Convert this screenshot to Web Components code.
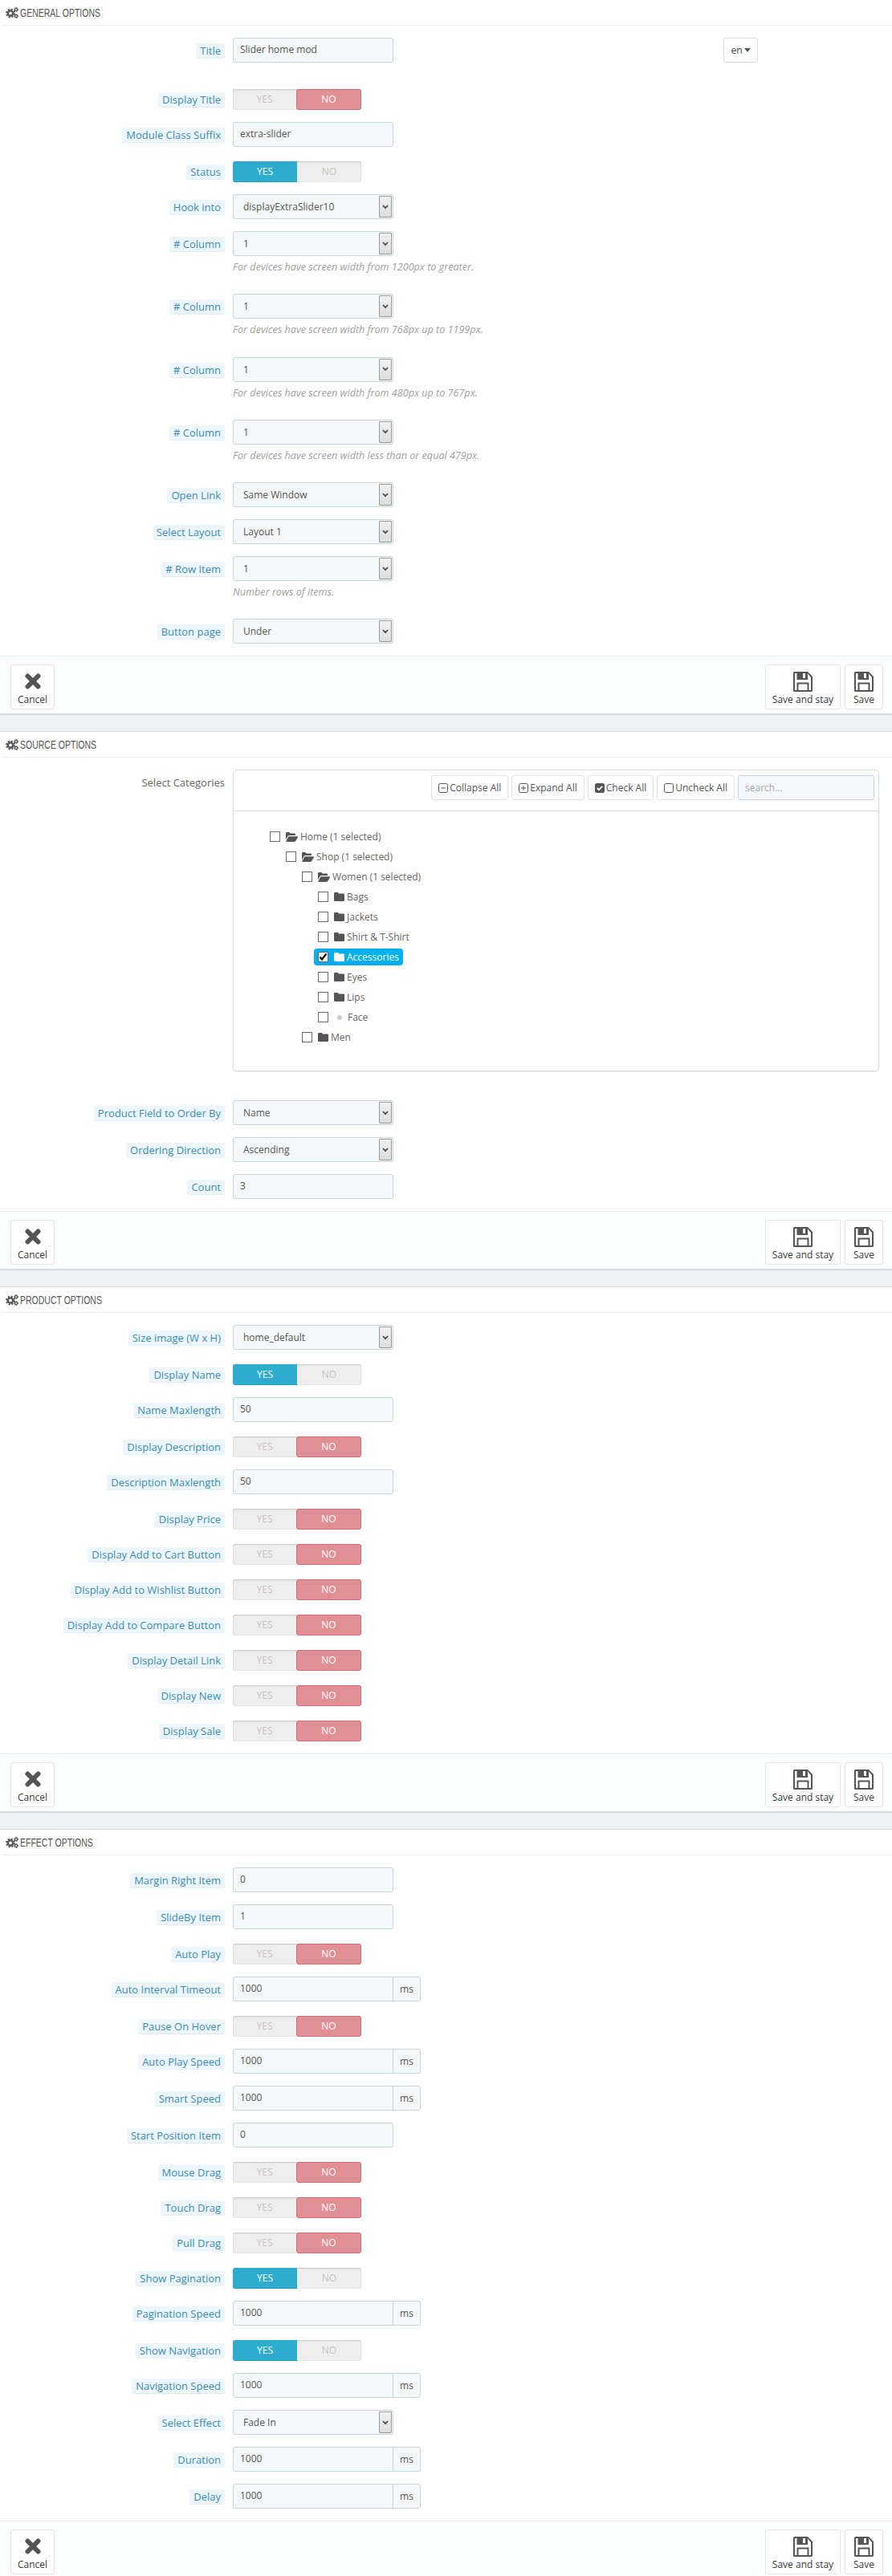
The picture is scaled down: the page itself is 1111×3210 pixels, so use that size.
<!DOCTYPE html>
<html lang="en">
<head>
<meta charset="utf-8">
<title>Slider home mod</title>
<style>
  html, body { margin: 0; padding: 0; background: #eff1f2; }
  body { font: 12px/18px "Open Sans", "Liberation Sans", sans-serif; color: #555; overflow-x: hidden; }
</style>
</head>
<body>

<ps-panel heading="General options" style="margin-top:-1px">
  <form-row label="Title" style="margin-bottom:30px">
    <div style="display:flex">
      <ps-input value="Slider home mod"></ps-input>
      <lang-button style="margin-left:411px"></lang-button>
    </div>
  </form-row>
  <form-row label="Display Title"><ps-switch></ps-switch></form-row>
  <form-row label="Module Class Suffix"><ps-input value="extra-slider"></ps-input></form-row>
  <form-row label="Status"><ps-switch on></ps-switch></form-row>
  <form-row label="Hook into"><ps-select value="displayExtraSlider10"></ps-select></form-row>
  <form-row label="# Column" help="For devices have screen width from 1200px to greater."><ps-select value="1"></ps-select></form-row>
  <form-row label="# Column" help="For devices have screen width from 768px up to 1199px."><ps-select value="1"></ps-select></form-row>
  <form-row label="# Column" help="For devices have screen width from 480px up to 767px."><ps-select value="1"></ps-select></form-row>
  <form-row label="# Column" help="For devices have screen width less than or equal 479px."><ps-select value="1"></ps-select></form-row>
  <form-row label="Open Link"><ps-select value="Same Window"></ps-select></form-row>
  <form-row label="Select Layout"><ps-select value="Layout 1"></ps-select></form-row>
  <form-row label="# Row Item" help="Number rows of items."><ps-select value="1"></ps-select></form-row>
  <form-row label="Button page"><ps-select value="Under"></ps-select></form-row>
</ps-panel>

<ps-panel heading="Source options">
  <form-row label="Select Categories" plain>
    <category-tree>
      <tree-node name="Home (1 selected)" open>
        <tree-node name="Shop (1 selected)" open>
          <tree-node name="Women (1 selected)" open>
            <tree-node name="Bags"></tree-node>
            <tree-node name="Jackets"></tree-node>
            <tree-node name="Shirt &amp; T-Shirt"></tree-node>
            <tree-node name="Accessories" selected></tree-node>
            <tree-node name="Eyes"></tree-node>
            <tree-node name="Lips"></tree-node>
            <tree-node name="Face" leaf></tree-node>
          </tree-node>
          <tree-node name="Men"></tree-node>
        </tree-node>
      </tree-node>
    </category-tree>
  </form-row>
  <form-row label="Product Field to Order By"><ps-select value="Name"></ps-select></form-row>
  <form-row label="Ordering Direction"><ps-select value="Ascending"></ps-select></form-row>
  <form-row label="Count"><ps-input value="3"></ps-input></form-row>
</ps-panel>

<ps-panel heading="Product options">
  <form-row label="Size image (W x H)"><ps-select value="home_default"></ps-select></form-row>
  <form-row label="Display Name"><ps-switch on></ps-switch></form-row>
  <form-row label="Name Maxlength"><ps-input value="50"></ps-input></form-row>
  <form-row label="Display Description"><ps-switch></ps-switch></form-row>
  <form-row label="Description Maxlength"><ps-input value="50"></ps-input></form-row>
  <form-row label="Display Price"><ps-switch></ps-switch></form-row>
  <form-row label="Display Add to Cart Button"><ps-switch></ps-switch></form-row>
  <form-row label="Display Add to Wishlist Button"><ps-switch></ps-switch></form-row>
  <form-row label="Display Add to Compare Button"><ps-switch></ps-switch></form-row>
  <form-row label="Display Detail Link"><ps-switch></ps-switch></form-row>
  <form-row label="Display New"><ps-switch></ps-switch></form-row>
  <form-row label="Display Sale"><ps-switch></ps-switch></form-row>
</ps-panel>

<ps-panel heading="Effect options">
  <form-row label="Margin Right Item"><ps-input value="0"></ps-input></form-row>
  <form-row label="SlideBy Item"><ps-input value="1"></ps-input></form-row>
  <form-row label="Auto Play"><ps-switch></ps-switch></form-row>
  <form-row label="Auto Interval Timeout"><ps-input value="1000" addon="ms"></ps-input></form-row>
  <form-row label="Pause On Hover"><ps-switch></ps-switch></form-row>
  <form-row label="Auto Play Speed"><ps-input value="1000" addon="ms"></ps-input></form-row>
  <form-row label="Smart Speed"><ps-input value="1000" addon="ms"></ps-input></form-row>
  <form-row label="Start Position Item"><ps-input value="0"></ps-input></form-row>
  <form-row label="Mouse Drag"><ps-switch></ps-switch></form-row>
  <form-row label="Touch Drag"><ps-switch></ps-switch></form-row>
  <form-row label="Pull Drag"><ps-switch></ps-switch></form-row>
  <form-row label="Show Pagination"><ps-switch on></ps-switch></form-row>
  <form-row label="Pagination Speed"><ps-input value="1000" addon="ms"></ps-input></form-row>
  <form-row label="Show Navigation"><ps-switch on></ps-switch></form-row>
  <form-row label="Navigation Speed"><ps-input value="1000" addon="ms"></ps-input></form-row>
  <form-row label="Select Effect"><ps-select value="Fade In"></ps-select></form-row>
  <form-row label="Duration"><ps-input value="1000" addon="ms"></ps-input></form-row>
  <form-row label="Delay"><ps-input value="1000" addon="ms"></ps-input></form-row>
</ps-panel>

<script>
const gearsIcon = `
  <svg width="16" height="14" viewBox="0 0 16 14" fill="none" stroke="#555">
    <circle cx="6" cy="7.5" r="3.1" stroke-width="2.4"/>
    <circle cx="6" cy="7.5" r="4.9" stroke-width="2" stroke-dasharray="2.2 1.65"/>
    <circle cx="13" cy="3" r="1.6" stroke-width="1.3"/>
    <circle cx="13" cy="3" r="2.5" stroke-width="1" stroke-dasharray="1.2 1.2"/>
    <circle cx="13" cy="11" r="1.6" stroke-width="1.3"/>
    <circle cx="13" cy="11" r="2.5" stroke-width="1" stroke-dasharray="1.2 1.2"/>
  </svg>`;
const cancelIcon = `
  <svg width="20" height="20" viewBox="0 0 20 20">
    <path d="M3.5 3.5L16.5 16.5M16.5 3.5L3.5 16.5" stroke="#555" stroke-width="6" stroke-linecap="round"/>
  </svg>`;
const saveIcon = `
  <svg width="24" height="25" viewBox="0 0 24 25">
    <path fill-rule="evenodd" fill="#555" d="M1.5 0H18l6 6v17.5a1.5 1.5 0 0 1-1.5 1.5h-21A1.5 1.5 0 0 1 0 23.500V1.500A1.500 1.500 0 0 1 1.500 0zM2 2v21h2.500v-9.500h15V23H22V7l-4-4.500V10H4.500V2zM6.500 15.500V23h11v-7.500z"/>
    <rect x="12" y="2" width="3" height="6" fill="#fff"/>
  </svg>`;
const folderIcon = `
  <svg width="13" height="11" viewBox="0 0 13 11"><path fill="currentColor" d="M1.200 0H4.500a1 1 0 0 1 1 .8L5.800 1.500H11.800A1.200 1.200 0 0 1 13 2.700V9.800A1.200 1.200 0 0 1 11.800 11H1.200A1.200 1.200 0 0 1 0 9.800V1.200A1.200 1.200 0 0 1 1.200 0z"/></svg>`;
const folderOpenIcon = `
  <svg width="15" height="12" viewBox="0 0 15 12"><path fill="currentColor" d="M0 9.500V1.200A1.200 1.200 0 0 1 1.200 0H4.200L5.500 1.500H10.800A1.200 1.200 0 0 1 12 2.700V4H4.200A2 2 0 0 0 2.500 5zM3.500 5.200H14a1 1 0 0 1 .8 1.500L12 11.200a1.500 1.500 0 0 1-1.200.8H1a.7.7 0 0 1-.6-1.100z"/></svg>`;

const panelTemplate = document.createElement("template");
panelTemplate.innerHTML = `
  <style>
    :host { display: block; background: #fff; border-top: 1px solid #d3d8db; margin-bottom: 20px; }
    .heading { display: flex; align-items: center; height: 31px; margin-left: 2px; padding-left: 5px; border-bottom: 1px solid #eeeff0; }
    .title { display: inline-block; margin-left: 2px; font: 15px/31px "Liberation Sans", sans-serif; color: #555; text-transform: uppercase; white-space: nowrap; transform: scaleX(.7); transform-origin: left center; }
    .body { padding-top: 15px; }
    .footer { display: flex; gap: 5px; height: 74px; box-sizing: border-box; padding: 10px 11px 0 13px; background: #fcfdfe; border-top: 1px solid #eaedef; border-bottom: 2px solid #d8dadb; }
    .spacer { flex: 1; }
  </style>
  <div class="heading">${gearsIcon}<span class="title"></span></div>
  <div class="body"><slot></slot></div>
  <div class="footer">
    <tool-button icon="cancel" label="Cancel" style="width:55px"></tool-button>
    <span class="spacer"></span>
    <tool-button icon="save" label="Save and stay" style="width:94px"></tool-button>
    <tool-button icon="save" label="Save" style="width:48px"></tool-button>
  </div>
`;
class PsPanel extends HTMLElement {
  constructor() {
    super();
    this.attachShadow({ mode: "open" });
    this.shadowRoot.appendChild(panelTemplate.content.cloneNode(true));
  }
  connectedCallback() {
    this.shadowRoot.querySelector(".title").textContent = this.getAttribute("heading");
  }
}

const toolTemplate = document.createElement("template");
toolTemplate.innerHTML = `
  <style>
    :host { display: block; height: 56px; box-sizing: border-box; background: #fff; border: 1px solid #e6e6e6; border-radius: 3px; color: #363a41; text-align: center; }
    .icon { display: flex; justify-content: center; align-items: center; height: 32px; margin-top: 4px; }
    .text { display: block; font-size: 12px; line-height: 16px; white-space: nowrap; margin-top: -1px; }
  </style>
  <div class="icon"></div>
  <span class="text"></span>
`;
class ToolButton extends HTMLElement {
  constructor() {
    super();
    this.attachShadow({ mode: "open" });
    this.shadowRoot.appendChild(toolTemplate.content.cloneNode(true));
  }
  connectedCallback() {
    this.shadowRoot.querySelector(".icon").innerHTML = this.getAttribute("icon") === "save" ? saveIcon : cancelIcon;
    this.shadowRoot.querySelector(".text").textContent = this.getAttribute("label");
  }
}

const rowTemplate = document.createElement("template");
rowTemplate.innerHTML = `
  <style>
    :host { display: flex; margin-bottom: 15px; }
    .left { flex: 0 0 280px; display: flex; justify-content: flex-end; align-items: flex-start; margin-right: 10px; }
    .label { margin-top: 7px; padding: 0 5px; height: 18px; line-height: 18px; font-size: 13px; background: #edf7fb; border-bottom: 1px solid #dfeef5; border-radius: 3px; color: #3a8cb8; white-space: nowrap; }
    :host([plain]) .label { background: none; border: 0; padding: 0; color: #666; }
    .right { flex: 1; min-width: 0; }
    .help { height: 32.25px; box-sizing: border-box; padding-top: 5px; font-style: italic; font-size: 12.6px; color: #a0a0a0; white-space: nowrap; }
    .help:empty { display: none; }
  </style>
  <div class="left"><span class="label"></span></div>
  <div class="right"><slot></slot><div class="help"></div></div>
`;
class FormRow extends HTMLElement {
  constructor() {
    super();
    this.attachShadow({ mode: "open" });
    this.shadowRoot.appendChild(rowTemplate.content.cloneNode(true));
  }
  connectedCallback() {
    this.shadowRoot.querySelector(".label").textContent = this.getAttribute("label");
    this.shadowRoot.querySelector(".help").textContent = this.getAttribute("help") || "";
  }
}

const inputTemplate = document.createElement("template");
inputTemplate.innerHTML = `
  <style>
    :host { display: flex; height: 31px; box-sizing: border-box; width: 200px; background: #f5f8f9; border: 1px solid #c7d6db; border-radius: 3px; color: #555; }
    :host([addon]) { width: 234px; }
    .value { flex: 0 0 auto; width: 190px; box-sizing: border-box; padding-left: 8px; line-height: 28px; }
    .addon { flex: 1; border-left: 1px solid #c7d6db; text-align: center; line-height: 29px; }
    :host(:not([addon])) .addon { display: none; }
    :host([addon]) .value { width: 198px; }
  </style>
  <span class="value"></span><span class="addon"></span>
`;
class PsInput extends HTMLElement {
  constructor() {
    super();
    this.attachShadow({ mode: "open" });
    this.shadowRoot.appendChild(inputTemplate.content.cloneNode(true));
  }
  connectedCallback() {
    this.shadowRoot.querySelector(".value").textContent = this.getAttribute("value");
    this.shadowRoot.querySelector(".addon").textContent = this.getAttribute("addon") || "";
  }
}

const selectTemplate = document.createElement("template");
selectTemplate.innerHTML = `
  <style>
    :host { display: flex; height: 31px; width: 200px; box-sizing: border-box; background: #f5f8f9; border: 1px solid #c7d6db; border-radius: 3px; color: #555; }
    .value { flex: 1; padding-left: 12px; line-height: 29px; }
    .arrow { display: flex; align-items: center; justify-content: center; width: 16px; margin: 1px; box-sizing: border-box; background: linear-gradient(#f0f0f0, #dcdcdc); border: 1px solid #9a9a9a; border-radius: 1px; }
  </style>
  <span class="value"></span>
  <span class="arrow"><svg width="8" height="6" viewBox="0 0 8 6"><path d="M1 1L4 4.200L7 1" fill="none" stroke="#4d4d4d" stroke-width="1.800"/></svg></span>
`;
class PsSelect extends HTMLElement {
  constructor() {
    super();
    this.attachShadow({ mode: "open" });
    this.shadowRoot.appendChild(selectTemplate.content.cloneNode(true));
  }
  connectedCallback() {
    this.shadowRoot.querySelector(".value").textContent = this.getAttribute("value");
  }
}

const switchTemplate = document.createElement("template");
switchTemplate.innerHTML = `
  <style>
    :host { display: flex; height: 26px; width: 160px; margin-top: 3px; border-radius: 3px; background: #eee; box-shadow: inset 0 1px 2px rgba(0,0,0,.16), inset 0 0 1px rgba(0,0,0,.12); text-align: center; line-height: 26px; color: #c4c4c4; }
    span { flex: 1; box-sizing: border-box; border-radius: 3px; }
    :host([on]) .yes { background: #2eacce; color: #fff; border-bottom: 1px solid #2a9bb9; border-radius: 3px 0 0 3px; }
    :host(:not([on])) .no { background: #e08f95; color: #fff; border: 1px solid #ce6e74; line-height: 24px; }
  </style>
  <span class="yes">YES</span><span class="no">NO</span>
`;
class PsSwitch extends HTMLElement {
  constructor() {
    super();
    this.attachShadow({ mode: "open" });
    this.shadowRoot.appendChild(switchTemplate.content.cloneNode(true));
  }
}

const langTemplate = document.createElement("template");
langTemplate.innerHTML = `
  <style>
    :host { display: flex; align-items: center; justify-content: center; gap: 2px; width: 43px; height: 31px; box-sizing: border-box; border: 1px solid #dcdcdc; border-radius: 3px; background: #fff; color: #444; }
    i { width: 0; height: 0; border: 4px solid transparent; border-top: 5px solid #555; border-bottom: 0; }
  </style>
  <span>en</span><i></i>
`;
class LangButton extends HTMLElement {
  constructor() {
    super();
    this.attachShadow({ mode: "open" });
    this.shadowRoot.appendChild(langTemplate.content.cloneNode(true));
  }
}

const treeTemplate = document.createElement("template");
treeTemplate.innerHTML = `
  <style>
    :host { display: block; width: 805px; height: 376px; box-sizing: border-box; margin-bottom: 21px; border: 1px solid #dcdcdc; border-radius: 5px; box-shadow: 0 1px 1px #e4e4e4; }
    .bar { display: flex; justify-content: flex-end; gap: 4px; height: 51px; box-sizing: border-box; padding: 6px 5px 0 0; border-bottom: 1px solid #dedede; }
    .btn { display: flex; align-items: center; gap: 2px; height: 31px; box-sizing: border-box; padding: 0 8px; background: #fff; border: 1px solid #e2e2e2; border-radius: 3px; color: #555; white-space: nowrap; }
    .search { width: 170px; height: 31px; box-sizing: border-box; padding-left: 8px; line-height: 29px; background: #f5f8f9; border: 1px solid #c7d6db; border-radius: 3px; color: #a8a8a8; }
    .list { padding: 19px 0 0 45px; }
    svg { display: block; }
  </style>
  <div class="bar">
    <span class="btn"><svg width="12" height="12" viewBox="0 0 12 12" fill="none" stroke="#555"><rect x=".5" y=".5" width="11" height="11" rx="2"/><path d="M3 6H9"/></svg>Collapse All</span>
    <span class="btn"><svg width="12" height="12" viewBox="0 0 12 12" fill="none" stroke="#555"><rect x=".5" y=".5" width="11" height="11" rx="2"/><path d="M3 6H9M6 3V9"/></svg>Expand All</span>
    <span class="btn"><svg width="12" height="12" viewBox="0 0 12 12"><rect width="12" height="12" rx="2.500" fill="#555"/><path d="M2.800 6L5 8.200L9.200 3.800" fill="none" stroke="#fff" stroke-width="1.800"/></svg>Check All</span>
    <span class="btn"><svg width="12" height="12" viewBox="0 0 12 12" fill="none" stroke="#555"><rect x=".5" y=".5" width="11" height="11" rx="2"/></svg>Uncheck All</span>
    <span class="search">search...</span>
  </div>
  <div class="list"><slot></slot></div>
`;
class CategoryTree extends HTMLElement {
  constructor() {
    super();
    this.attachShadow({ mode: "open" });
    this.shadowRoot.appendChild(treeTemplate.content.cloneNode(true));
  }
}

const nodeTemplate = document.createElement("template");
nodeTemplate.innerHTML = `
  <style>
    :host { display: block; }
    .row { display: flex; align-items: center; height: 25px; color: #666; }
    .inner { display: flex; align-items: center; height: 21px; margin-left: -5px; padding: 0 5px; border-radius: 4px; white-space: nowrap; }
    .box { flex: none; position: relative; width: 13px; height: 13px; box-sizing: border-box; margin-right: 7px; background: #fff; border: 1px solid #6a6a6a; }
    .box svg { position: absolute; left: 0; top: 0; display: none; }
    .icon { display: flex; align-items: center; color: #555; margin-right: 3px; }
    .dot { width: 14px; display: flex; justify-content: center; }
    .dot::before { content: ""; width: 6px; height: 6px; border-radius: 50%; background: #ccc; }
    .kids { padding-left: 20px; }
    :host([selected]) .inner { background: #00aff0; color: #fff; }
    :host([selected]) .icon { color: #fff; }
    :host([selected]) .box svg { display: block; }
  </style>
  <div class="row"><div class="inner">
    <span class="box"><svg width="11" height="11" viewBox="0 0 11 11"><path d="M1.500 5.500L4 8.500L9.500 1.500" fill="none" stroke="#000" stroke-width="2.200"/></svg></span>
    <span class="icon"></span><span class="name"></span>
  </div></div>
  <div class="kids"><slot></slot></div>
`;
class TreeNode extends HTMLElement {
  constructor() {
    super();
    this.attachShadow({ mode: "open" });
    this.shadowRoot.appendChild(nodeTemplate.content.cloneNode(true));
  }
  connectedCallback() {
    const icon = this.shadowRoot.querySelector(".icon");
    if (this.hasAttribute("leaf")) icon.innerHTML = '<span class="dot"></span>';
    else icon.innerHTML = this.hasAttribute("open") ? folderOpenIcon : folderIcon;
    this.shadowRoot.querySelector(".name").textContent = this.getAttribute("name");
  }
}

window.customElements.define("ps-panel", PsPanel);
window.customElements.define("tool-button", ToolButton);
window.customElements.define("form-row", FormRow);
window.customElements.define("ps-input", PsInput);
window.customElements.define("ps-select", PsSelect);
window.customElements.define("ps-switch", PsSwitch);
window.customElements.define("lang-button", LangButton);
window.customElements.define("category-tree", CategoryTree);
window.customElements.define("tree-node", TreeNode);
</script>
</body>
</html>
